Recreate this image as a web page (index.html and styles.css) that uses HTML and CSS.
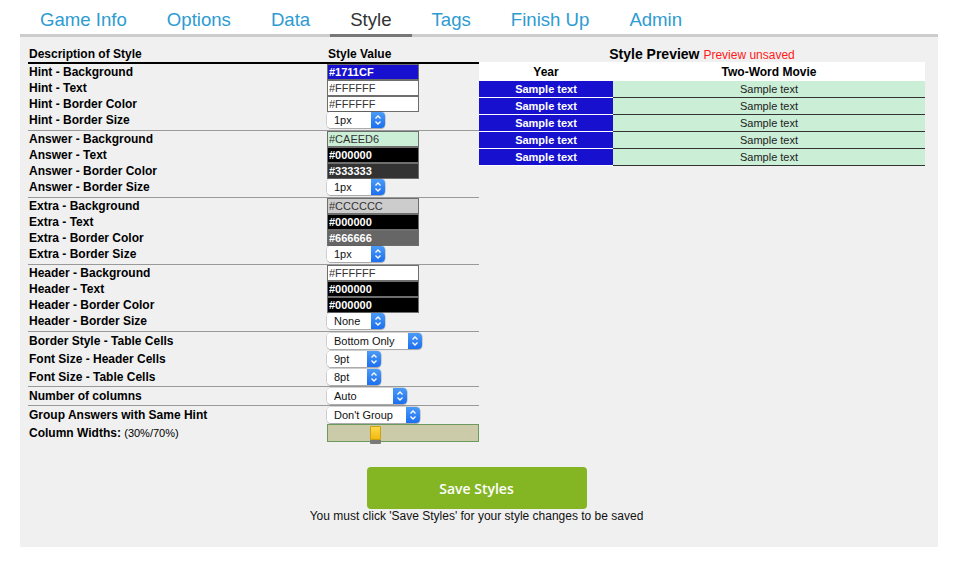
FILE: index.html
```html
<!DOCTYPE html>
<html>
<head>
<meta charset="utf-8">
<link rel="stylesheet" href="styles.css">
</head>
<body>
<nav class="tabs">
  <a class="tab">Game Info</a>
  <a class="tab">Options</a>
  <a class="tab">Data</a>
  <a class="tab active">Style</a>
  <a class="tab">Tags</a>
  <a class="tab">Finish Up</a>
  <a class="tab">Admin</a>
</nav>
<main class="panel">
  <div class="layout">
    <section class="settings">
      <div class="head-row"><span>Description of Style</span><span>Style Value</span></div>

      <div class="group">
        <div class="row"><span class="label">Hint - Background</span><input class="color dark" style="background:#1711CF" value="#1711CF"></div>
        <div class="row"><span class="label">Hint - Text</span><input class="color light" style="background:#FFFFFF" value="#FFFFFF"></div>
        <div class="row"><span class="label">Hint - Border Color</span><input class="color light" style="background:#FFFFFF" value="#FFFFFF"></div>
        <div class="row"><span class="label">Hint - Border Size</span><span class="sel w58"><select><option>1px</option></select><span class="arrow"><svg viewBox="0 0 14 16" width="14" height="16"><path d="M4.5 6.5 L7 4 L9.5 6.5 M4.5 9.5 L7 12 L9.5 9.5" fill="none" stroke="#fff" stroke-width="1.3"/></svg></span></span></div>
      </div>

      <div class="group">
        <div class="row"><span class="label">Answer - Background</span><input class="color light" style="background:#CAEED6" value="#CAEED6"></div>
        <div class="row"><span class="label">Answer - Text</span><input class="color dark" style="background:#000000" value="#000000"></div>
        <div class="row"><span class="label">Answer - Border Color</span><input class="color dark" style="background:#333333" value="#333333"></div>
        <div class="row"><span class="label">Answer - Border Size</span><span class="sel w58"><select><option>1px</option></select><span class="arrow"><svg viewBox="0 0 14 16" width="14" height="16"><path d="M4.5 6.5 L7 4 L9.5 6.5 M4.5 9.5 L7 12 L9.5 9.5" fill="none" stroke="#fff" stroke-width="1.3"/></svg></span></span></div>
      </div>

      <div class="group">
        <div class="row"><span class="label">Extra - Background</span><input class="color light" style="background:#CCCCCC" value="#CCCCCC"></div>
        <div class="row"><span class="label">Extra - Text</span><input class="color dark" style="background:#000000" value="#000000"></div>
        <div class="row"><span class="label">Extra - Border Color</span><input class="color dark" style="background:#666666" value="#666666"></div>
        <div class="row"><span class="label">Extra - Border Size</span><span class="sel w58"><select><option>1px</option></select><span class="arrow"><svg viewBox="0 0 14 16" width="14" height="16"><path d="M4.5 6.5 L7 4 L9.5 6.5 M4.5 9.5 L7 12 L9.5 9.5" fill="none" stroke="#fff" stroke-width="1.3"/></svg></span></span></div>
      </div>

      <div class="group">
        <div class="row"><span class="label">Header - Background</span><input class="color light" style="background:#FFFFFF" value="#FFFFFF"></div>
        <div class="row"><span class="label">Header - Text</span><input class="color dark" style="background:#000000" value="#000000"></div>
        <div class="row"><span class="label">Header - Border Color</span><input class="color dark" style="background:#000000" value="#000000"></div>
        <div class="row"><span class="label">Header - Border Size</span><span class="sel w58"><select><option>None</option></select><span class="arrow"><svg viewBox="0 0 14 16" width="14" height="16"><path d="M4.5 6.5 L7 4 L9.5 6.5 M4.5 9.5 L7 12 L9.5 9.5" fill="none" stroke="#fff" stroke-width="1.3"/></svg></span></span></div>
      </div>

      <div class="group tall">
        <div class="row"><span class="label">Border Style - Table Cells</span><span class="sel w95"><select><option>Bottom Only</option></select><span class="arrow"><svg viewBox="0 0 14 16" width="14" height="16"><path d="M4.5 6.5 L7 4 L9.5 6.5 M4.5 9.5 L7 12 L9.5 9.5" fill="none" stroke="#fff" stroke-width="1.3"/></svg></span></span></div>
        <div class="row"><span class="label">Font Size - Header Cells</span><span class="sel w54"><select><option>9pt</option></select><span class="arrow"><svg viewBox="0 0 14 16" width="14" height="16"><path d="M4.5 6.5 L7 4 L9.5 6.5 M4.5 9.5 L7 12 L9.5 9.5" fill="none" stroke="#fff" stroke-width="1.3"/></svg></span></span></div>
        <div class="row"><span class="label">Font Size - Table Cells</span><span class="sel w54"><select><option>8pt</option></select><span class="arrow"><svg viewBox="0 0 14 16" width="14" height="16"><path d="M4.5 6.5 L7 4 L9.5 6.5 M4.5 9.5 L7 12 L9.5 9.5" fill="none" stroke="#fff" stroke-width="1.3"/></svg></span></span></div>
      </div>

      <div class="group tall">
        <div class="row"><span class="label">Number of columns</span><span class="sel w80"><select><option>Auto</option></select><span class="arrow"><svg viewBox="0 0 14 16" width="14" height="16"><path d="M4.5 6.5 L7 4 L9.5 6.5 M4.5 9.5 L7 12 L9.5 9.5" fill="none" stroke="#fff" stroke-width="1.3"/></svg></span></span></div>
      </div>

      <div class="group tall last">
        <div class="row"><span class="label">Group Answers with Same Hint</span><span class="sel w93"><select><option>Don't Group</option></select><span class="arrow"><svg viewBox="0 0 14 16" width="14" height="16"><path d="M4.5 6.5 L7 4 L9.5 6.5 M4.5 9.5 L7 12 L9.5 9.5" fill="none" stroke="#fff" stroke-width="1.3"/></svg></span></span></div>
        <div class="row"><span class="label">Column Widths: <span class="note">(30%/70%)</span></span><span class="slider"><span class="thumb"></span></span></div>
      </div>
    </section>

    <section class="preview">
      <h2 class="preview-title">Style Preview <span class="unsaved">Preview unsaved</span></h2>
      <table class="ptable">
        <colgroup><col class="c1"><col class="c2"></colgroup>
        <thead><tr><th>Year</th><th>Two-Word Movie</th></tr></thead>
        <tbody>
          <tr><td class="hint">Sample text</td><td class="ans">Sample text</td></tr>
          <tr><td class="hint">Sample text</td><td class="ans">Sample text</td></tr>
          <tr><td class="hint">Sample text</td><td class="ans">Sample text</td></tr>
          <tr><td class="hint">Sample text</td><td class="ans">Sample text</td></tr>
          <tr><td class="hint">Sample text</td><td class="ans">Sample text</td></tr>
        </tbody>
      </table>
    </section>
  </div>

  <div class="save">
    <button class="save-btn">Save Styles</button>
    <p class="save-note">You must click 'Save Styles' for your style changes to be saved</p>
  </div>
</main>
</body>
</html>
```

FILE: styles.css
```css
html, body {
  margin: 0;
  padding: 0;
  background: #ffffff;
  font-family: "Liberation Sans", Arial, Helvetica, sans-serif;
  color: #000;
}

.tabs {
  display: flex;
  margin: 0 20px;
  padding-top: 5px;
  border-bottom: 3px solid #cccccc;
}

.tab {
  display: block;
  padding: 0 20px;
  font-size: 18.6px;
  line-height: 29px;
  color: #2e9bd2;
  text-decoration: none;
  border-bottom: 3px solid transparent;
  margin-bottom: -3px;
}

.tab.active {
  color: #333333;
  border-bottom-color: #777777;
}

.panel {
  margin: 0 20px 22px;
  background: #f0f0f0;
  padding: 0 13px 0 8px;
  height: 510px;
  box-sizing: border-box;
}

.layout {
  display: grid;
  grid-template-columns: 451px 446px;
}

.head-row {
  display: grid;
  grid-template-columns: 299px 1fr;
  padding: 9px 0 0 1px;
  line-height: 16px;
  font-size: 12px;
  font-weight: bold;
  border-bottom: 2px solid #000;
}

.group {
  padding-bottom: 2px;
  border-bottom: 1px solid #999999;
}

.group.tall {
  padding-bottom: 0;
}

.group.last {
  border-bottom: none;
}

.row {
  display: grid;
  grid-template-columns: 299px 1fr;
  align-items: center;
  height: 16px;
}

.group.tall .row {
  height: 18px;
}

.label {
  font-size: 12px;
  font-weight: bold;
  padding-left: 1px;
  white-space: nowrap;
}

.note {
  font-weight: normal;
  font-size: 11px;
}

.color {
  box-sizing: border-box;
  width: 92px;
  height: 16px;
  margin: 0;
  padding: 0 1px;
  border: 1px solid #6e6e6e;
  font-family: "Liberation Sans", Arial, sans-serif;
  font-size: 11px;
  outline: none;
}

.color.dark {
  color: #ffffff;
  font-weight: bold;
}

.color.light {
  color: #333333;
}

.sel {
  display: inline-flex;
  height: 16px;
  border-radius: 4px;
  background: #ffffff;
  box-shadow: 0 0 0 0.5px rgba(0,0,0,0.25), 0 1px 1px rgba(0,0,0,0.2);
  overflow: hidden;
}

.sel select {
  appearance: none;
  -webkit-appearance: none;
  flex: 1;
  min-width: 0;
  border: none;
  background: #ffffff;
  margin: 0;
  padding: 0 0 0 7px;
  height: 16px;
  font-family: "Liberation Sans", Arial, sans-serif;
  font-size: 11px;
  color: #111;
  outline: none;
}

.sel .arrow {
  width: 14px;
  height: 16px;
  background: linear-gradient(#4b9bf7, #1c6ff0);
  display: flex;
}

.w58 { width: 58px; }
.w54 { width: 54px; }
.w80 { width: 80px; }
.w93 { width: 93px; }
.w95 { width: 95px; }

.slider {
  position: relative;
  display: block;
  box-sizing: border-box;
  width: 152px;
  height: 18px;
  background: #cccba9;
  border: 1px solid #6c9a5c;
}

.thumb {
  position: absolute;
  left: 42px;
  top: 1px;
  width: 11px;
  height: 14px;
  background: linear-gradient(#ffd84a, #f2b90f);
  border: 1px solid #caa10e;
  box-sizing: border-box;
  border-radius: 1px;
  box-shadow: 0 4px 0 #7a7a7a;
}

.preview-title {
  margin: 0;
  padding-top: 9px;
  height: 25px;
  box-sizing: border-box;
  line-height: 16px;
  font-size: 14px;
  font-weight: bold;
  text-align: center;
}

.unsaved {
  color: #ff1a1a;
  font-weight: normal;
  font-size: 12px;
}

.ptable {
  width: 446px;
  table-layout: fixed;
  border-collapse: collapse;
  border-spacing: 0;
}

.c1 { width: 134px; }
.c2 { width: 312px; }

.ptable th {
  background: #ffffff;
  height: 19px;
  padding: 0;
  font-size: 12px;
  font-weight: bold;
  text-align: center;
}

.ptable td {
  height: 16px;
  padding: 0;
  font-size: 11px;
  text-align: center;
  line-height: 16px;
}

.ptable td.hint {
  background: #1711cf;
  color: #ffffff;
  font-weight: bold;
  border-bottom: 1px solid #ffffff;
}

.ptable td.ans {
  background: #caeed6;
  color: #222;
  border-bottom: 1px solid #333333;
}

.save {
  display: flex;
  flex-direction: column;
  align-items: center;
  padding-top: 25px;
}

.save-btn {
  width: 220px;
  height: 42px;
  border: none;
  border-radius: 4px;
  background: #84b624;
  color: #ffffff;
  font-family: "Open Sans", sans-serif;
  font-weight: 600;
  font-size: 14px;
  padding: 0;
}

.save-note {
  margin: 0;
  font-size: 12px;
  line-height: 14px;
  color: #111;
}
```
